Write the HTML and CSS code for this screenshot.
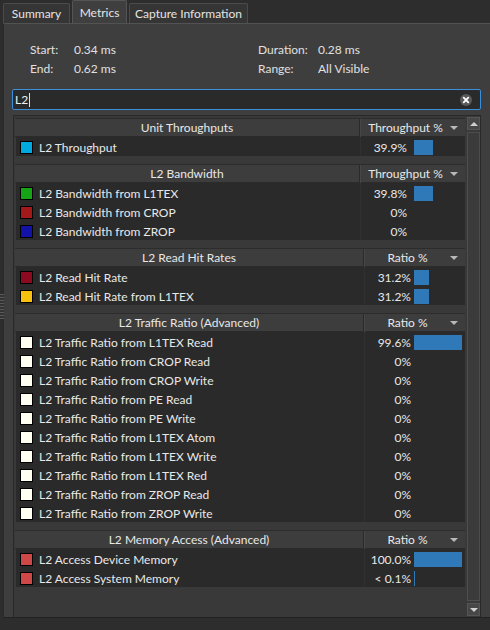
FILE: index.html
```html
<!DOCTYPE html>
<html>
<head>
<meta charset="utf-8">
<link rel="stylesheet" href="styles.css">
</head>
<body>
<div class="tabbar">
  <div class="tab tab-summary">Summary</div>
  <div class="tab tab-metrics active">Metrics</div>
  <div class="tab tab-capture">Capture Information</div>
</div>
<div class="panel">
  <div class="grip"></div>
  <div class="info">
    <span>Start:</span><span>0.34 ms</span><span>Duration:</span><span>0.28 ms</span>
    <span>End:</span><span>0.62 ms</span><span>Range:</span><span>All Visible</span>
  </div>
  <div class="search">
    <span class="query">L2</span><span class="caret"></span>
    <span class="clear"><svg width="12" height="12" viewBox="0 0 12 12"><circle cx="6" cy="6" r="6" fill="#5a5a5a"/><path d="M3.7 3.7 L8.3 8.3 M8.3 3.7 L3.7 8.3" stroke="#ffffff" stroke-width="1.8" stroke-linecap="round"/></svg></span>
  </div>
  <div class="table">
    <div class="groups">
      <div class="group tp">
        <div class="hdr"><div class="c1">Unit Throughputs</div><div class="c2"><span class="hl">Throughput %</span><i class="sort"></i></div></div>
        <div class="row"><div class="c1"><i class="sw sw-cyan"></i>L2 Throughput</div><div class="c2"><span class="val">39.9%</span><span class="bar" style="width:19px"></span></div></div>
      </div>
      <div class="group tp">
        <div class="hdr"><div class="c1">L2 Bandwidth</div><div class="c2"><span class="hl">Throughput %</span><i class="sort"></i></div></div>
        <div class="row"><div class="c1"><i class="sw sw-green"></i>L2 Bandwidth from L1TEX</div><div class="c2"><span class="val">39.8%</span><span class="bar" style="width:19px"></span></div></div>
        <div class="row"><div class="c1"><i class="sw sw-red"></i>L2 Bandwidth from CROP</div><div class="c2"><span class="val">0%</span></div></div>
        <div class="row"><div class="c1"><i class="sw sw-blue"></i>L2 Bandwidth from ZROP</div><div class="c2"><span class="val">0%</span></div></div>
      </div>
      <div class="group rt">
        <div class="hdr"><div class="c1">L2 Read Hit Rates</div><div class="c2"><span class="hl">Ratio %</span><i class="sort"></i></div></div>
        <div class="row"><div class="c1"><i class="sw sw-crimson"></i>L2 Read Hit Rate</div><div class="c2"><span class="val">31.2%</span><span class="bar" style="width:15px"></span></div></div>
        <div class="row"><div class="c1"><i class="sw sw-gold"></i>L2 Read Hit Rate from L1TEX</div><div class="c2"><span class="val">31.2%</span><span class="bar" style="width:15px"></span></div></div>
      </div>
      <div class="group rt">
        <div class="hdr"><div class="c1">L2 Traffic Ratio (Advanced)</div><div class="c2"><span class="hl">Ratio %</span><i class="sort"></i></div></div>
        <div class="row"><div class="c1"><i class="sw sw-white"></i>L2 Traffic Ratio from L1TEX Read</div><div class="c2"><span class="val">99.6%</span><span class="bar" style="width:48px"></span></div></div>
        <div class="row"><div class="c1"><i class="sw sw-white"></i>L2 Traffic Ratio from CROP Read</div><div class="c2"><span class="val">0%</span></div></div>
        <div class="row"><div class="c1"><i class="sw sw-white"></i>L2 Traffic Ratio from CROP Write</div><div class="c2"><span class="val">0%</span></div></div>
        <div class="row"><div class="c1"><i class="sw sw-white"></i>L2 Traffic Ratio from PE Read</div><div class="c2"><span class="val">0%</span></div></div>
        <div class="row"><div class="c1"><i class="sw sw-white"></i>L2 Traffic Ratio from PE Write</div><div class="c2"><span class="val">0%</span></div></div>
        <div class="row"><div class="c1"><i class="sw sw-white"></i>L2 Traffic Ratio from L1TEX Atom</div><div class="c2"><span class="val">0%</span></div></div>
        <div class="row"><div class="c1"><i class="sw sw-white"></i>L2 Traffic Ratio from L1TEX Write</div><div class="c2"><span class="val">0%</span></div></div>
        <div class="row"><div class="c1"><i class="sw sw-white"></i>L2 Traffic Ratio from L1TEX Red</div><div class="c2"><span class="val">0%</span></div></div>
        <div class="row"><div class="c1"><i class="sw sw-white"></i>L2 Traffic Ratio from ZROP Read</div><div class="c2"><span class="val">0%</span></div></div>
        <div class="row"><div class="c1"><i class="sw sw-white"></i>L2 Traffic Ratio from ZROP Write</div><div class="c2"><span class="val">0%</span></div></div>
      </div>
      <div class="group rt">
        <div class="hdr"><div class="c1">L2 Memory Access (Advanced)</div><div class="c2"><span class="hl">Ratio %</span><i class="sort"></i></div></div>
        <div class="row"><div class="c1"><i class="sw sw-salmon"></i>L2 Access Device Memory</div><div class="c2"><span class="val">100.0%</span><span class="bar" style="width:48px"></span></div></div>
        <div class="row"><div class="c1"><i class="sw sw-salmon"></i>L2 Access System Memory</div><div class="c2"><span class="val">&lt; 0.1%</span><span class="bar" style="width:1px"></span></div></div>
      </div>
    </div>
    <div class="scrollbar">
      <div class="sbtn"><i class="up"></i></div>
      <div class="track"></div>
      <div class="sbtn"><i class="down"></i></div>
    </div>
  </div>
</div>
</body>
</html>
```
FILE: styles.css
```css
* { box-sizing: border-box; }
html, body { margin: 0; padding: 0; }
body {
  width: 490px;
  height: 630px;
  overflow: hidden;
  background: #2d2d2d;
  color: #e8e8e8;
  font-family: Lato, "Noto Sans", sans-serif;
  font-size: 12px;
}
.tabbar {
  height: 23px;
  display: flex;
  align-items: flex-end;
  padding-left: 3px;
  gap: 2px;
  background: #2d2d2d;
}
.tab {
  height: 20px;
  line-height: 20px;
  text-align: center;
  background: #353535;
  border: 1px solid #4b4b4b;
  border-bottom: none;
  border-radius: 2px 2px 0 0;
  color: #e4e4e4;
}
.tab-summary { width: 67px; }
.tab-metrics { width: 55px; }
.tab-capture { width: 119px; }
.tab.active {
  height: 23px;
  line-height: 23px;
  background: #3f3f3f;
  border-color: #555555;
}
.panel {
  position: relative;
  height: 595px;
  margin-left: 3px;
  background: #3e3e3e;
  border-top: 1px solid #525252;
  border-left: 1px solid #2a2a2a;
  border-bottom: 1px solid #222222;
  padding: 16px 9px 0 8px;
  display: flex;
  flex-direction: column;
}
.grip {
  position: absolute;
  left: -4px;
  top: 270px;
  width: 4px;
  height: 25px;
  background: repeating-linear-gradient(#5a5a5a 0 1px, #333333 1px 3px);
}
.info {
  display: grid;
  grid-template-columns: 44px 184px 60px auto;
  line-height: 19px;
  padding-left: 18px;
  color: #e0e0e0;
}
.search {
  margin-top: 11px;
  height: 21px;
  border: 1px solid #3b8fdc;
  border-radius: 2px;
  background: #2a2a2a;
  display: flex;
  align-items: center;
  padding-left: 2px;
  padding-right: 8px;
}
.query { color: #f0f0f0; }
.caret { width: 1px; height: 14px; background: #e0e0e0; margin-left: 1px; }
.clear { margin-left: auto; display: flex; }
.table {
  flex: 1;
  margin-top: 5px;
  margin-left: 1px;
  border: 1px solid #292929;
  border-bottom: none;
  padding: 2px 0 0 1px;
  background: #393939;
  display: flex;
  gap: 2px;
}
.groups { width: 450px; }
.group { margin-bottom: 8px; }
.hdr, .row {
  display: grid;
  height: 19px;
}
.tp .hdr, .tp .row { grid-template-columns: 345px 105px; }
.rt .hdr, .rt .row { grid-template-columns: 349px 101px; }
.hdr {
  background: #3d3d3d;
  border-top: 1px solid #2c2c2c;
  border-bottom: 1px solid #2b2b2b;
  line-height: 18px;
  color: #e8e8e8;
}
.hdr .c1 {
  text-align: center;
  border-right: 1px solid #2a2a2a;
}
.hdr .c2 {
  display: flex;
  align-items: center;
  border-left: 1px solid #474747;
}
.hl { flex: 1; text-align: center; }
.sort {
  width: 0; height: 0;
  border-left: 4px solid transparent;
  border-right: 4px solid transparent;
  border-top: 4px solid #b8b8b8;
  margin-right: 7px;
}
.row {
  background: #2a2a2a;
  border-left: 1px solid #3a3a3a;
  line-height: 17px;
}
.row .c1 {
  display: flex;
  align-items: center;
  padding-left: 4px;
  padding-top: 1px;
  border-right: 1px solid #303030;
  white-space: nowrap;
}
.row .c2 {
  display: flex;
  align-items: center;
  padding-top: 1px;
}
.sw {
  width: 13px;
  height: 13px;
  border: 1px solid #000000;
  margin-right: 6px;
  flex: none;
}
.sw-cyan { background: #00a9df; }
.sw-green { background: #16a316; }
.sw-red { background: #a31818; }
.sw-blue { background: #1212a6; }
.sw-crimson { background: #8c0a1f; }
.sw-gold { background: #f7c20d; }
.sw-white { background: #fffff2; }
.sw-salmon { background: #cf4848; }
.val { width: 46px; text-align: right; flex: none; }
.bar { height: 15px; background: #3079b9; flex: none; }
.tp .bar { margin-left: 7px; }
.rt .bar { margin-left: 3px; }
.scrollbar {
  width: 13px;
  margin-top: -1px;
  display: flex;
  flex-direction: column;
  gap: 2px;
  padding-bottom: 1px;
}
.sbtn {
  height: 13px;
  background: #474747;
  border: 1px solid #555555;
  display: flex;
  align-items: center;
  justify-content: center;
}
.up, .down {
  width: 0; height: 0;
  border-left: 4px solid transparent;
  border-right: 4px solid transparent;
}
.up { border-bottom: 4px solid #d0d0d0; }
.down { border-top: 4px solid #d0d0d0; }
.track {
  flex: 1;
  background: #3b3b3b;
  border: 1px solid #4e4e4e;
}
```
